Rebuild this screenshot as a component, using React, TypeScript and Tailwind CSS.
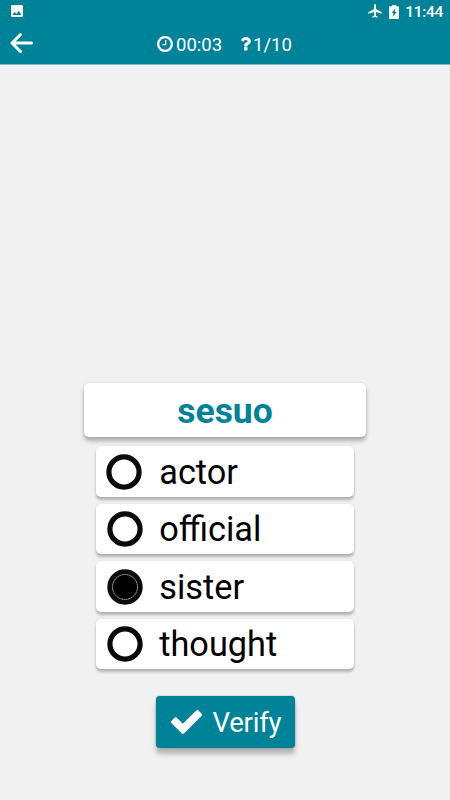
import React from 'react';
import { MdAirplanemodeActive, MdImage } from 'react-icons/md';

interface Option {
  label: string;
  selected?: boolean;
}

const options: Option[] = [
  { label: 'actor' },
  { label: 'official' },
  { label: 'sister', selected: true },
  { label: 'thought' },
];

const BatteryIcon: React.FC = () => (
  <svg className="h-[14px] w-[10px]" viewBox="0 0 10 14" fill="currentColor">
    <path fillRule="evenodd" d="M3 0h4v1.3h2q1 0 1 1V13q0 1-1 1H1q-1 0-1-1V2.3q0-1 1-1h2zM6.500 3.2 2.500 8h2L3.500 12 7.700 7h-2z" />
  </svg>
);

const ClockIcon: React.FC = () => (
  <svg className="h-4 w-4" viewBox="0 128 1536 1536" fill="currentColor">
    <path d="M896 544v448q0 14-9 23t-23 9h-320q-14 0-23-9t-9-23v-64q0-14 9-23t23-9h224v-352q0-14 9-23t23-9h64q14 0 23 9t9 23zm416 352q0-148-73-273t-198-198-273-73-273 73-198 198-73 273 73 273 198 198 273 73 273-73 198-198 73-273zm224 0q0 209-103 385.5t-279.5 279.5-385.5 103-385.5-103-279.5-279.5-103-385.5 103-385.5 279.5-279.5 385.5-103 385.5 103 279.5 279.5 103 385.5z" />
  </svg>
);

const QuestionIcon: React.FC = () => (
  <svg className="h-[13.5px] w-[10px]" viewBox="109 256 911 1272" fill="currentColor">
    <path d="M704 1248v240q0 16-12 28t-28 12h-240q-16 0-28-12t-12-28v-240q0-16 12-28t28-12h240q16 0 28 12t12 28zm316-600q0 54-15.5 101t-35 76.5-55 59.5-57.5 43.5-61 35.5q-41 23-68.5 65t-27.5 67q0 17-12 32.5t-28 15.5h-240q-15 0-25.5-18.5t-10.5-37.5v-45q0-83 65-156.5t143-108.5q59-27 84-56t25-76q0-42-46.5-74t-107.5-32q-65 0-108 29-35 25-107 115-13 16-31 16-12 0-25-8l-164-125q-13-10-15.5-25t5.5-28q160-266 464-266 80 0 161 31t146 83 106 127.5 41 158.5z" />
  </svg>
);

const CheckIcon: React.FC = () => (
  <svg className="h-[24px] w-[31px]" viewBox="121 334 1550 1188" fill="currentColor">
    <path d="M1671 566q0 40-28 68l-724 724-136 136q-28 28-68 28t-68-28l-136-136-362-362q-28-28-28-68t28-68l136-136q28-28 68-28t68 28l294 295 656-657q28-28 68-28t68 28l136 136q28 28 28 68z" />
  </svg>
);

const Radio: React.FC<{ selected?: boolean }> = ({ selected }) => (
  <svg className="mt-px h-9 w-9 shrink-0" viewBox="0 0 36 36">
    <circle cx="18" cy="18" r="15.1" fill="none" stroke="#0a0a0a" strokeWidth="5.2" />
    {selected && (
      <>
        <circle cx="18" cy="18" r="13" fill="#000" />
        <circle cx="18" cy="18" r="12.5" fill="none" stroke="#ccc" strokeWidth="0.8" strokeDasharray="2 0.4" />
      </>
    )}
  </svg>
);

const App: React.FC = () => {
  return (
    <div className="flex h-[800px] w-[450px] flex-col overflow-hidden bg-[#f1f1f1] font-['Roboto',sans-serif]">
      <header className="h-[65px] shrink-0 border-b border-[#80bac5] bg-[#008299] text-white">
        <div className="flex h-6 items-center justify-between pr-[7px] pl-[9px]">
          <MdImage className="-mt-0.5 h-4 w-4" />
          <div className="flex items-center">
            <MdAirplanemodeActive className="-mt-0.5 h-4 w-4" />
            <span className="-mt-px ml-[6px]">
              <BatteryIcon />
            </span>
            <span className="ml-[6px] text-[15.5px] leading-6 font-medium tracking-[-0.3px]">11:44</span>
          </div>
        </div>
        <div className="flex h-10 items-center pl-2.5">
          <svg className="-mt-0.5 h-5 w-[23px]" viewBox="0 0 23 20" fill="none" stroke="currentColor" strokeWidth="3" strokeLinecap="round" strokeLinejoin="round">
            <path d="M10.5 1.5 2 10l8.5 8.5M2 10h19.5" />
          </svg>
          <div className="ml-[124px] flex items-center gap-[3px] text-[18.5px]">
            <ClockIcon />
            <span className="pt-[3px]">00:03</span>
          </div>
          <div className="ml-[19px] flex items-center gap-[2px] text-[18.5px]">
            <QuestionIcon />
            <span className="pt-[3px]">1/10</span>
          </div>
        </div>
      </header>

      <main className="flex flex-col items-center pt-[318px]">
        <h1 className="flex h-[53.5px] w-[282px] items-center justify-center rounded-[5px] bg-white pt-[4px] text-[35.5px] font-bold text-[#008299] shadow-[0_4px_4px_rgba(0,0,0,0.28),0_0_2px_rgba(0,0,0,0.15)]">
          sesuo
        </h1>
        <ul className="mt-[9.5px] flex w-[257.5px] flex-col gap-[7px]">
          {options.map((option) => (
            <li
              key={option.label}
              className="flex h-[50.5px] items-center gap-4 rounded-[5px] bg-white pl-[11px] text-[34.3px] text-black shadow-[0_3px_3px_rgba(0,0,0,0.26),0_0_2px_rgba(0,0,0,0.1)] first:gap-[17px] first:pl-[10px]"
            >
              <Radio selected={option.selected} />
              <span className="pt-0.5">{option.label}</span>
            </li>
          ))}
        </ul>
        <button className="mt-[27px] flex h-[52px] w-[139px] items-center gap-[11px] rounded-[4px] bg-[#008299] pl-[15px] text-[27.5px] tracking-[-0.2px] text-white shadow-[0_6px_5px_rgba(0,0,0,0.25),0_0_2px_rgba(0,0,0,0.3)]">
          <CheckIcon />
          <span className="pt-0.5">Verify</span>
        </button>
      </main>
    </div>
  );
};

export default App;
